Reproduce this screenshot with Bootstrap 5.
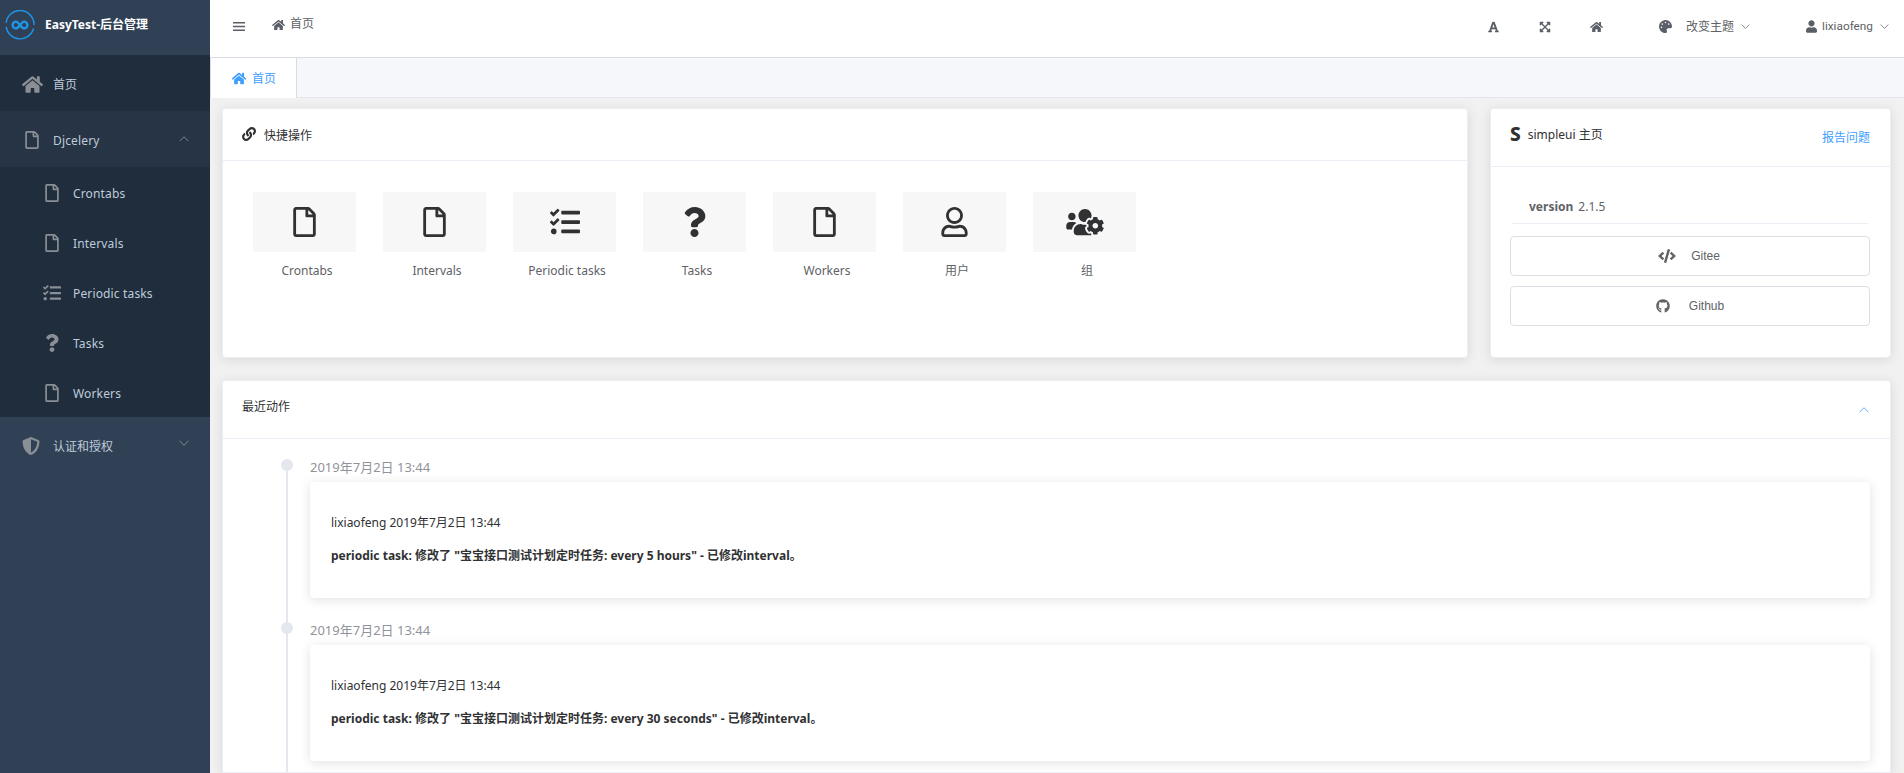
<!DOCTYPE html>
<html lang="zh-CN">
<head>
<meta charset="utf-8">
<title>EasyTest-后台管理</title>
<link href="https://cdn.jsdelivr.net/npm/bootstrap@5.3.0/dist/css/bootstrap.min.css" rel="stylesheet">
<style>
html,body{height:100%;}
body{overflow:hidden;background:#fff;color:#606266;font-family:"Noto Sans","Noto Sans CJK SC",sans-serif;font-size:12px;}
.ic{display:inline-block;fill:currentColor;flex:none;}
.app-shell{height:773px;overflow:hidden;}
.side{width:210px;flex:none;background:#304156;color:#bfcbd9;height:100%;}
.side-logo{height:55px;color:#fff;font-weight:700;font-size:12px;padding:0 0 5px 5px;gap:10px;}
.side-item{height:56px;padding:2px 21px 0 22px;font-size:12px;color:#bfcbd9;}
.side-item .ic{color:#8a8f96;}
.side-home{background:#1f2d3d;}
.side-open{background:#263445;}
.side-sub{background:#1f2d3d;}
.side-child{height:50px;padding:2px 0 0 45px;font-size:12px;color:#bfcbd9;letter-spacing:.15px;}
.side-child .ic{color:#8a8f96;}
.side-item .icon-shift{margin-left:3px;}
.side-child .icon-task{margin-left:-2px;}
.icon-cell{width:31px;display:flex;justify-content:flex-start;}
.side-sub .icon-cell{width:28px;}
.side-label{padding-top:2px;}
.lat-label{letter-spacing:.15px;}
.caret-r{margin-left:auto;}
.caret-u{margin-top:-3px;}
.caret-d{margin-top:-7px;}
.side-item .caret-r{color:#8a94a3;}
.main-col{min-width:0;}
.topbar{height:58px;border-bottom:1px solid #d8dce5;color:#606266;flex:none;}
.crumb-ic,.tool-ic{color:#5a5e66;}
.tb-burger{margin:21px 0 0 23px;}
.tb-home{margin:19px 0 0 27px;}
.tb-crumb{margin:15px 0 0 5px;line-height:18px;color:#606266;}
.tb-tools{padding:15px 15px 0 0;height:38px;color:#606266;}
.tb-g1{margin-left:40px;}
.tb-g2{margin-left:39px;}
.tb-g3{margin-left:56px;}
.tb-theme{margin-left:14px;}
.tb-caret{margin-left:7px;}
.tb-g4{margin-left:56px;}
.tb-user{margin-left:5px;font-family:Roboto,sans-serif;font-size:11.8px;}
.tb-caret-end{margin-left:7px;}
.tabbar{height:40px;background:#f5f7fb;border-bottom:1px solid #e4e7ed;flex:none;}
.tab-on{width:87px;background:#fff;border-right:1px solid #d8dce5;border-left:1px solid #d8dce5;color:#409eff;font-size:12px;margin-bottom:-1px;height:40px;gap:5px;padding:1px 0 0 20px;}
.body-pane{padding:10px 13px 0 12px;background:#f1f1f1;flex:1;min-height:0;overflow:hidden;}
.sheet{border:1px solid #ebeef5;border-radius:4px;box-shadow:0 2px 12px 0 rgba(0,0,0,.1);background:#fff;}
.sheet-hd{background:#fff;border-bottom:1px solid #ebeef5;padding:0 19px;border-radius:3px 3px 0 0!important;color:#303133;font-size:12px;}
.flex-keep{flex:none;}
.quick-card{height:250px;width:1246px;flex:none;}
.quick-hd{height:52px;gap:8px;}
.quick-ic{margin-top:-2px;}
.quick-tt{padding-top:2px;}
.quick-bd{padding:31px 20px 0 30px;gap:27px;}
.quick-item{width:103px;color:#606266;font-size:12px;text-align:center;}
.quick-box{height:60px;background:#f7f7f7;color:#303133;}
.quick-text{margin-top:10px;line-height:18px;padding-left:5px;}
.home-card{height:250px;width:401px;flex:none;margin-left:22px;}
.home-hd{height:58px;}
.home-tt{gap:7px;margin-top:-6px;}
.s-mark{font-size:19px;font-weight:800;color:#303133;line-height:1;}
.home-report{color:#409eff;font-size:12px;margin:0 1px 0 0;text-decoration:none;}
.home-bd{padding:20px 20px 0 19px;}
.ver-row{height:37px;padding:8px 0 0 17px;margin:0 2px;border-bottom:1px solid #ebeef5;gap:5px;font-size:12px;line-height:24px;}
.ver-row b{color:#606266;font-weight:700;}
.link-btn{height:40px;border:1px solid #dcdfe6;border-radius:4px;color:#606266;font-family:"Liberation Sans",sans-serif;font-size:12px;background:#fff;padding:0;width:100%;}
.btn-a{margin-top:12px;gap:15px;padding-right:2px;}
.btn-b{margin-top:10px;gap:19px;}
.log-card{margin-top:22px;flex:1;min-height:0;border-radius:4px 4px 0 0;}
.log-hd{height:58px;flex:none;}
.log-title{margin-top:-5px;}
.log-caret{color:#409eff;margin-right:2px;}
.log-bd{padding:0 20px 0 54px;overflow:hidden;}
.tl-item{padding-left:33px;height:163px;position:relative;}
.tl-item::before{content:"";position:absolute;left:9px;top:26px;bottom:-26px;width:2px;background:#e4e7ed;}
.tl-dot{position:absolute;left:4px;top:20px;width:12px;height:12px;border-radius:50%;background:#e4e7ed;}
.tl-date{color:#909399;font-size:13px;height:43px;padding-top:18px;line-height:20px;}
.tl-box{height:116px;border:0;border-radius:4px;box-shadow:0 2px 12px 0 rgba(0,0,0,.12);padding:25px 20px 0 21px;color:#303133;font-size:12px;}
.tl-line{line-height:32px;}
.tl-strong{font-weight:700;color:#303133;margin-top:1px;}
</style>
</head>
<body>
<svg width="0" height="0" class="position-absolute" aria-hidden="true">
<symbol id="i-home" viewBox="0 0 576 512"><path d="M280.37 148.26L96 300.11V464a16 16 0 0 0 16 16l112.06-.29a16 16 0 0 0 15.92-16V368a16 16 0 0 1 16-16h64a16 16 0 0 1 16 16v95.64a16 16 0 0 0 16 16.05L464 480a16 16 0 0 0 16-16V300L295.67 148.26a12.19 12.19 0 0 0-15.3 0zM571.6 251.47L488 182.56V44.05a12 12 0 0 0-12-12h-56a12 12 0 0 0-12 12v72.61L318.47 43a48 48 0 0 0-61 0L4.34 251.47a12 12 0 0 0-1.6 16.9l25.5 31A12 12 0 0 0 45.15 301l235.22-193.74a12.19 12.19 0 0 1 15.3 0L530.9 301a12 12 0 0 0 16.9-1.6l25.5-31a12 12 0 0 0-1.7-16.93z"/></symbol>
<symbol id="i-file" viewBox="0 0 384 512"><path d="M369.9 97.9L286 14C277 5 264.8-.1 252.1-.1H48C21.5 0 0 21.5 0 48v416c0 26.5 21.5 48 48 48h288c26.5 0 48-21.5 48-48V131.9c0-12.7-5.1-25-14.1-34zM332.1 128H256V51.9l76.1 76.1zM48 464V48h160v104c0 13.3 10.7 24 24 24h104v288H48z"/></symbol>
<symbol id="i-tasks" viewBox="0 0 512 512"><path d="M139.61 35.5a12 12 0 0 0-17 0L58.93 98.81l-22.7-22.12a12 12 0 0 0-17 0L3.53 92.41a12 12 0 0 0 0 17l47.59 47.4a12.78 12.78 0 0 0 17.61 0l15.59-15.62L156.52 69a12.09 12.09 0 0 0 .09-17zm0 159.19a12 12 0 0 0-17 0l-63.68 63.72-22.7-22.1a12 12 0 0 0-17 0L3.53 252a12 12 0 0 0 0 17L51 316.5a12.77 12.77 0 0 0 17.6 0l15.7-15.69 72.2-72.22a12 12 0 0 0 .09-16.9zM64 368c-26.49 0-48.59 21.5-48.59 48S37.53 464 64 464a48 48 0 0 0 0-96zm432 16H208a16 16 0 0 0-16 16v32a16 16 0 0 0 16 16h288a16 16 0 0 0 16-16v-32a16 16 0 0 0-16-16zm0-320H208a16 16 0 0 0-16 16v32a16 16 0 0 0 16 16h288a16 16 0 0 0 16-16V80a16 16 0 0 0-16-16zm0 160H208a16 16 0 0 0-16 16v32a16 16 0 0 0 16 16h288a16 16 0 0 0 16-16v-32a16 16 0 0 0-16-16z"/></symbol>
<symbol id="i-q" viewBox="0 0 384 512"><path d="M202.021 0C122.202 0 70.503 32.703 29.914 91.026c-7.363 10.58-5.093 25.086 5.178 32.874l43.138 32.709c10.373 7.865 25.132 6.026 33.253-4.148 25.049-31.381 43.63-49.449 82.757-49.449 30.764 0 68.816 19.799 68.816 49.631 0 22.552-18.617 34.134-48.993 51.164-35.423 19.86-82.299 44.576-82.299 106.405V320c0 13.255 10.745 24 24 24h72.471c13.255 0 24-10.745 24-24v-5.773c0-42.86 125.268-44.645 125.268-160.627C377.504 66.256 286.902 0 202.021 0zM192 373.459c-38.196 0-69.271 31.075-69.271 69.271 0 38.195 31.075 69.27 69.271 69.27s69.271-31.075 69.271-69.271-31.075-69.27-69.271-69.27z"/></symbol>
<symbol id="i-user-o" viewBox="0 0 448 512"><path d="M313.6 304c-28.7 0-42.5 16-89.6 16-47.1 0-60.8-16-89.6-16C60.2 304 0 364.2 0 438.4V464c0 26.5 21.5 48 48 48h352c26.5 0 48-21.5 48-48v-25.6c0-74.2-60.2-134.4-134.4-134.4zM400 464H48v-25.6c0-47.6 38.8-86.4 86.4-86.4 14.6 0 38.3 16 89.6 16 51.7 0 74.9-16 89.6-16 47.6 0 86.4 38.8 86.4 86.4V464zM224 288c79.5 0 144-64.5 144-144S303.5 0 224 0 80 64.5 80 144s64.5 144 144 144zm0-240c52.9 0 96 43.1 96 96s-43.1 96-96 96-96-43.1-96-96 43.1-96 96-96z"/></symbol>
<symbol id="i-user" viewBox="0 0 448 512"><path d="M224 256c70.7 0 128-57.3 128-128S294.7 0 224 0 96 57.3 96 128s57.3 128 128 128zm89.6 32h-16.7c-22.2 10.2-46.9 16-72.9 16s-50.6-5.8-72.9-16h-16.7C60.2 288 0 348.2 0 422.4V464c0 26.5 21.5 48 48 48h352c26.5 0 48-21.5 48-48v-41.6c0-74.2-60.2-134.4-134.4-134.4z"/></symbol>
<symbol id="i-cog" viewBox="0 0 640 512"><path d="M610.5 341.3c2.6-14.1 2.6-28.5 0-42.6l25.8-14.9c3-1.7 4.3-5.2 3.3-8.5-6.7-21.6-18.2-41.2-33.2-57.4-2.3-2.5-6-3.1-9-1.4l-25.8 14.9c-10.9-9.3-23.4-16.5-36.9-21.3v-29.8c0-3.4-2.4-6.4-5.7-7.1-22.3-5-45-4.8-66.2 0-3.3.7-5.7 3.7-5.7 7.1v29.8c-13.5 4.8-26 12-36.9 21.3l-25.8-14.9c-2.9-1.7-6.7-1.1-9 1.4-15 16.2-26.5 35.8-33.2 57.4-1 3.3.4 6.8 3.3 8.5l25.8 14.9c-2.6 14.1-2.6 28.5 0 42.6l-25.8 14.9c-3 1.7-4.3 5.2-3.3 8.5 6.7 21.6 18.2 41.1 33.2 57.4 2.3 2.5 6 3.1 9 1.4l25.8-14.9c10.9 9.3 23.4 16.5 36.9 21.3v29.8c0 3.4 2.4 6.4 5.7 7.1 22.3 5 45 4.8 66.2 0 3.3-.7 5.7-3.7 5.7-7.1v-29.8c13.5-4.8 26-12 36.9-21.3l25.8 14.9c2.9 1.7 6.7 1.1 9-1.4 15-16.2 26.5-35.8 33.2-57.4 1-3.3-.4-6.8-3.3-8.5l-25.8-14.9zM496 368.5c-26.8 0-48.5-21.8-48.5-48.5s21.8-48.5 48.5-48.5 48.5 21.8 48.5 48.5-21.7 48.5-48.5 48.5zM96 224c35.3 0 64-28.7 64-64s-28.7-64-64-64-64 28.7-64 64 28.7 64 64 64zm224 32c1.9 0 3.7-.5 5.6-.6 8.3-21.7 20.5-42.1 36.3-59.2 7.4-8 17.9-12.6 28.9-12.6 6.9 0 13.7 1.8 19.6 5.3l7.9 4.6c.8-.5 1.6-.9 2.4-1.4 7-14.6 11.2-30.8 11.2-48 0-61.9-50.1-112-112-112S208 82.1 208 144c0 61.9 50.1 112 112 112zm105.2 194.5c-2.3-1.2-4.6-2.6-6.8-3.9-8.2 4.8-15.3 9.8-27.5 9.8-10.9 0-21.4-4.6-28.9-12.6-18.3-19.8-32.3-43.9-40.2-69.6-10.7-34.5 24.9-49.7 25.8-50.3-.1-2.6-.1-5.2 0-7.8l-7.9-4.6c-3.8-2.2-7-5-9.8-8.1-3.3.2-6.5.6-9.8.6-24.6 0-47.6-6-68.5-16h-8.3C179.6 288 128 339.6 128 403.2V432c0 26.5 21.5 48 48 48h255.4c-3.7-6-6.2-12.8-6.2-20.3v-9.2zM173.1 274.6C161.5 263.1 145.6 256 128 256H64c-35.3 0-64 28.7-64 64v32c0 17.7 14.3 32 32 32h65.9c6.3-47.4 34.9-87.3 75.2-109.4z"/></symbol>
<symbol id="i-link" viewBox="0 0 512 512"><path d="M326.612 185.391c59.747 59.809 58.927 155.698.36 214.59-.11.12-.24.25-.36.37l-67.2 67.2c-59.27 59.27-155.699 59.262-214.96 0-59.27-59.26-59.27-155.7 0-214.96l37.106-37.106c9.84-9.84 26.786-3.3 27.294 10.606.648 17.722 3.826 35.527 9.69 52.721 1.986 5.822.567 12.262-3.783 16.612l-13.087 13.087c-28.026 28.026-28.905 73.66-1.155 101.96 28.024 28.579 74.086 28.749 102.325.51l67.2-67.19c28.191-28.191 28.073-73.757 0-101.83-3.701-3.694-7.429-6.564-10.341-8.569a16.037 16.037 0 0 1-6.947-12.606c-.396-10.567 3.348-21.456 11.698-29.806l21.054-21.055c5.521-5.521 14.182-6.199 20.584-1.731a152.482 152.482 0 0 1 20.522 17.197zM467.547 44.449c-59.261-59.262-155.69-59.27-214.96 0l-67.2 67.2c-.12.12-.25.25-.36.37-58.566 58.892-59.387 154.781.36 214.59a152.454 152.454 0 0 0 20.521 17.196c6.402 4.468 15.064 3.789 20.584-1.731l21.054-21.055c8.35-8.35 12.094-19.239 11.698-29.806a16.037 16.037 0 0 0-6.947-12.606c-2.912-2.005-6.64-4.875-10.341-8.569-28.073-28.073-28.191-73.639 0-101.83l67.2-67.19c28.239-28.239 74.3-28.069 102.325.51 27.75 28.3 26.872 73.934-1.155 101.96l-13.087 13.087c-4.35 4.35-5.769 10.79-3.783 16.612 5.864 17.194 9.042 34.999 9.69 52.721.509 13.906 17.454 20.446 27.294 10.606l37.106-37.106c59.271-59.259 59.271-155.699.001-214.959z"/></symbol>
<symbol id="i-shield" viewBox="0 0 512 512"><path d="M466.5 83.7l-192-80a48.15 48.15 0 0 0-36.9 0l-192 80C27.7 91.1 16 108.6 16 128c0 198.5 114.5 335.7 221.5 380.3 11.8 4.9 25.1 4.9 36.9 0C360.1 472.6 496 349.3 496 128c0-19.4-11.7-36.9-29.5-44.3zM256.1 446.3l-.1-381 175.9 73.3c-3.3 151.4-82.1 261.1-175.8 307.7z"/></symbol>
<symbol id="i-font" viewBox="0 0 448 512"><path d="M432 416h-23.41L277.88 53.69A32 32 0 0 0 247.58 32h-47.16a32 32 0 0 0-30.3 21.69L39.41 416H16a16 16 0 0 0-16 16v32a16 16 0 0 0 16 16h128a16 16 0 0 0 16-16v-32a16 16 0 0 0-16-16h-19.6l23.3-64h152.6l23.3 64H304a16 16 0 0 0-16 16v32a16 16 0 0 0 16 16h128a16 16 0 0 0 16-16v-32a16 16 0 0 0-16-16zM176.85 272L224 142.51 271.15 272z"/></symbol>
<symbol id="i-expand" viewBox="0 0 448 512"><path d="M448.3 344v112a23.94 23.94 0 0 1-24 24h-112c-21.39 0-32.09-25.9-17-41l36.2-36.2L224 295.6 116.77 402.9 153 439c15.09 15.1 4.39 41-17 41H24a23.94 23.94 0 0 1-24-24V344c0-21.4 25.89-32.1 41-17l36.19 36.2L184.46 256 77.18 148.7 41 185c-15.1 15.1-41 4.4-41-17V56a23.94 23.94 0 0 1 24-24h112c21.39 0 32.09 25.9 17 41l-36.2 36.2L224 216.4l107.23-107.3L295 73c-15.09-15.1-4.39-41 17-41h112a23.94 23.94 0 0 1 24 24v112c0 21.4-25.89 32.1-41 17l-36.19-36.2L263.54 256l107.28 107.3L407 327.1c15.1-15.2 41-4.5 41 16.9z"/></symbol>
<symbol id="i-palette" viewBox="0 0 512 512"><path d="M204.3 5C104.9 24.4 24.8 104.3 5.2 203.4c-37 187 131.7 326.4 258.8 306.7 41.2-6.4 61.4-54.6 42.5-91.7-23.1-45.4 9.9-98.4 60.9-98.4h79.7c35.8 0 64.8-29.6 64.9-65.3C511.5 97.1 368.1-26.9 204.3 5zM96 320c-17.7 0-32-14.3-32-32s14.3-32 32-32 32 14.3 32 32-14.3 32-32 32zm32-128c-17.7 0-32-14.3-32-32s14.3-32 32-32 32 14.3 32 32-14.3 32-32 32zm128-64c-17.7 0-32-14.3-32-32s14.3-32 32-32 32 14.3 32 32-14.3 32-32 32zm128 64c-17.7 0-32-14.3-32-32s14.3-32 32-32 32 14.3 32 32-14.3 32-32 32z"/></symbol>
<symbol id="i-code" viewBox="0 0 640 512"><path d="M278.9 511.5l-61-17.7c-6.4-1.8-10-8.5-8.2-14.9L346.2 8.7c1.8-6.4 8.5-10 14.9-8.2l61 17.7c6.4 1.8 10 8.5 8.2 14.9L293.8 503.3c-1.9 6.4-8.5 10.1-14.9 8.2zm-114-112.2l43.5-46.4c4.6-4.9 4.3-12.7-.8-17.2L117 256l90.6-79.7c5.1-4.5 5.5-12.3.8-17.2l-43.5-46.4c-4.5-4.8-12.1-5.1-17-.5L3.8 247.2c-5.1 4.7-5.1 12.8 0 17.5l144.1 135.1c4.9 4.6 12.5 4.4 17-.5zm327.2.6l144.1-135.1c5.1-4.7 5.1-12.8 0-17.5L492.1 112.1c-4.8-4.5-12.4-4.3-17 .5L431.6 159c-4.6 4.9-4.3 12.7.8 17.2L523 256l-90.6 79.7c-5.1 4.5-5.5 12.3-.8 17.2l43.5 46.4c4.5 4.9 12.1 5.1 17 .6z"/></symbol>
<symbol id="i-github" viewBox="0 0 496 512"><path d="M165.9 397.4c0 2-2.3 3.6-5.2 3.6-3.3.3-5.6-1.3-5.6-3.6 0-2 2.3-3.6 5.2-3.6 3-.3 5.6 1.3 5.6 3.6zm-31.1-4.5c-.7 2 1.3 4.3 4.3 4.9 2.6 1 5.6 0 6.2-2s-1.3-4.3-4.3-5.2c-2.6-.7-5.5.3-6.2 2.3zm44.2-1.7c-2.9.7-4.9 2.6-4.6 4.9.3 2 2.9 3.3 5.9 2.6 2.9-.7 4.9-2.6 4.6-4.6-.3-1.9-3-3.2-5.9-2.9zM244.8 8C106.1 8 0 113.3 0 252c0 110.9 69.8 205.8 169.5 239.2 12.8 2.3 17.3-5.6 17.3-12.1 0-6.2-.3-40.4-.3-61.4 0 0-70 15-84.7-29.8 0 0-11.4-29.1-27.8-36.6 0 0-22.9-15.7 1.6-15.4 0 0 24.9 2 38.6 25.8 21.9 38.6 58.6 27.5 72.9 20.9 2.3-16 8.8-27.1 16-33.7-55.9-6.2-112.3-14.3-112.3-110.5 0-27.5 7.6-41.3 23.6-58.9-2.6-6.5-11.1-33.3 2.6-67.9 20.9-6.5 69 27 69 27 20-5.6 41.5-8.5 62.8-8.5s42.8 2.9 62.8 8.5c0 0 48.1-33.6 69-27 13.7 34.7 5.2 61.4 2.6 67.9 16 17.7 25.8 31.5 25.8 58.9 0 96.5-58.9 104.2-114.8 110.5 9.2 7.9 17 22.9 17 46.4 0 33.7-.3 75.4-.3 83.6 0 6.5 4.6 14.4 17.3 12.1C428.2 457.8 496 362.9 496 252 496 113.3 383.5 8 244.8 8z"/></symbol>
<symbol id="i-up" viewBox="0 0 12 7"><path d="M.6 6.2 6 .8l5.4 5.4" fill="none" stroke="currentColor" stroke-width="1"/></symbol>
<symbol id="i-down" viewBox="0 0 12 7"><path d="M.6.8 6 6.2 11.4.8" fill="none" stroke="currentColor" stroke-width="1"/></symbol>
</svg>

<div class="app-shell d-flex">
  <aside class="side d-flex flex-column">
    <div class="side-logo d-flex align-items-center">
      <svg width="30" height="30" viewBox="0 0 30 30" class="ic">
        <path d="M1.1 12.9A14 14 0 0 1 29 15M28.6 18.4A14 14 0 0 1 1.2 16.9" fill="none" stroke="#1e96ea" stroke-width="1.4"/>
        <path d="M15 15c-2-2.6-2.9-3.4-4-3.4a3.4 3.4 0 0 0 0 6.8c1.1 0 2-.8 4-3.4s2.900-3.400 4-3.400a3.4 3.4 0 0 1 0 6.800c-1.100 0-2-.8-4-3.400z" fill="none" stroke="#1e96ea" stroke-width="2.400"/>
      </svg>
      <span>EasyTest-后台管理</span>
    </div>
    <div class="side-item side-home d-flex align-items-center">
      <span class="icon-cell"><svg class="ic" width="21" height="19"><use href="#i-home"/></svg></span>
      <span class="side-label">首页</span>
    </div>
    <div class="side-item side-open d-flex align-items-center">
      <span class="icon-cell"><svg class="ic icon-shift" width="14" height="18"><use href="#i-file"/></svg></span>
      <span class="side-label lat-label">Djcelery</span>
      <svg class="ic caret-r caret-u" width="10" height="6"><use href="#i-up"/></svg>
    </div>
    <div class="side-sub">
      <div class="side-child d-flex align-items-center"><span class="icon-cell"><svg class="ic" width="14" height="18"><use href="#i-file"/></svg></span><span class="side-label">Crontabs</span></div>
      <div class="side-child d-flex align-items-center"><span class="icon-cell"><svg class="ic" width="14" height="18"><use href="#i-file"/></svg></span><span class="side-label">Intervals</span></div>
      <div class="side-child d-flex align-items-center"><span class="icon-cell"><svg class="ic icon-task" width="18" height="18"><use href="#i-tasks"/></svg></span><span class="side-label">Periodic tasks</span></div>
      <div class="side-child d-flex align-items-center"><span class="icon-cell"><svg class="ic" width="14" height="18"><use href="#i-q"/></svg></span><span class="side-label">Tasks</span></div>
      <div class="side-child d-flex align-items-center"><span class="icon-cell"><svg class="ic" width="14" height="18"><use href="#i-file"/></svg></span><span class="side-label">Workers</span></div>
    </div>
    <div class="side-item d-flex align-items-center">
      <span class="icon-cell"><svg class="ic" width="18" height="18"><use href="#i-shield"/></svg></span>
      <span class="side-label">认证和授权</span>
      <svg class="ic caret-r caret-d" width="10" height="6"><use href="#i-down"/></svg>
    </div>
  </aside>

  <div class="main-col flex-grow-1 d-flex flex-column">
    <header class="topbar d-flex align-items-start">
      <svg class="ic crumb-ic tb-burger" width="12" height="11" viewBox="0 0 12 11"><path d="M0 1h12v1.400H0zM0 4.800h12v1.400H0zM0 8.600h12V10H0z"/></svg>
      <svg class="ic crumb-ic tb-home" width="13" height="12"><use href="#i-home"/></svg>
      <span class="tb-crumb">首页</span>
      <div class="ms-auto d-flex align-items-center tb-tools">
        <svg class="ic tool-ic" width="11" height="12"><use href="#i-font"/></svg>
        <svg class="ic tool-ic tb-g1" width="12" height="12"><use href="#i-expand"/></svg>
        <svg class="ic tool-ic tb-g2" width="13" height="12"><use href="#i-home"/></svg>
        <svg class="ic tool-ic tb-g3" width="13" height="13"><use href="#i-palette"/></svg>
        <span class="tb-theme">改变主题</span>
        <svg class="ic tool-ic tb-caret" width="9" height="5"><use href="#i-down"/></svg>
        <svg class="ic tool-ic tb-g4" width="11" height="13"><use href="#i-user"/></svg>
        <span class="tb-user">lixiaofeng</span>
        <svg class="ic tool-ic tb-caret-end" width="9" height="5"><use href="#i-down"/></svg>
      </div>
    </header>
    <nav class="tabbar d-flex">
      <div class="tab-on d-flex align-items-center">
        <svg class="ic" width="16" height="13"><use href="#i-home"/></svg><span>首页</span>
      </div>
    </nav>
    <main class="body-pane d-flex flex-column">
      <div class="d-flex flex-keep">
        <section class="card sheet quick-card">
          <div class="card-header sheet-hd quick-hd d-flex align-items-center">
            <svg class="ic quick-ic" width="14" height="14"><use href="#i-link"/></svg><span class="quick-tt">快捷操作</span>
          </div>
          <div class="card-body quick-bd d-flex align-items-start">
            <div class="quick-item"><div class="quick-box d-flex align-items-center justify-content-center"><svg class="ic" width="23" height="30"><use href="#i-file"/></svg></div><div class="quick-text">Crontabs</div></div>
            <div class="quick-item"><div class="quick-box d-flex align-items-center justify-content-center"><svg class="ic" width="23" height="30"><use href="#i-file"/></svg></div><div class="quick-text">Intervals</div></div>
            <div class="quick-item"><div class="quick-box d-flex align-items-center justify-content-center"><svg class="ic" width="30" height="30"><use href="#i-tasks"/></svg></div><div class="quick-text">Periodic tasks</div></div>
            <div class="quick-item"><div class="quick-box d-flex align-items-center justify-content-center"><svg class="ic" width="23" height="30"><use href="#i-q"/></svg></div><div class="quick-text">Tasks</div></div>
            <div class="quick-item"><div class="quick-box d-flex align-items-center justify-content-center"><svg class="ic" width="23" height="30"><use href="#i-file"/></svg></div><div class="quick-text">Workers</div></div>
            <div class="quick-item"><div class="quick-box d-flex align-items-center justify-content-center"><svg class="ic" width="27" height="30"><use href="#i-user-o"/></svg></div><div class="quick-text">用户</div></div>
            <div class="quick-item"><div class="quick-box d-flex align-items-center justify-content-center"><svg class="ic" width="38" height="30"><use href="#i-cog"/></svg></div><div class="quick-text">组</div></div>
          </div>
        </section>
        <section class="card sheet home-card">
          <div class="card-header sheet-hd home-hd d-flex align-items-center justify-content-between">
            <div class="home-tt d-flex align-items-center"><span class="s-mark">S</span><span>simpleui 主页</span></div>
            <a class="home-report" href="#">报告问题</a>
          </div>
          <div class="card-body home-bd d-flex flex-column">
            <div class="ver-row d-flex"><b>version</b><span>2.1.5</span></div>
            <button class="btn link-btn d-flex align-items-center justify-content-center btn-a" type="button"><svg class="ic" width="18" height="14"><use href="#i-code"/></svg><span>Gitee</span></button>
            <button class="btn link-btn d-flex align-items-center justify-content-center btn-b" type="button"><svg class="ic" width="14" height="14"><use href="#i-github"/></svg><span>Github</span></button>
          </div>
        </section>
      </div>
      <section class="card sheet log-card">
        <div class="card-header sheet-hd log-hd d-flex align-items-center justify-content-between">
          <span class="log-title">最近动作</span>
          <svg class="ic log-caret" width="10" height="6"><use href="#i-up"/></svg>
        </div>
        <div class="card-body log-bd">
          <div class="tl-item"><span class="tl-dot"></span>
            <div class="tl-date">2019年7月2日 13:44</div>
            <div class="card tl-box"><div class="tl-line">lixiaofeng 2019年7月2日 13:44</div><div class="tl-line tl-strong">periodic task: 修改了 "宝宝接口测试计划定时任务: every 5 hours" - 已修改interval。</div></div>
          </div>
          <div class="tl-item"><span class="tl-dot"></span>
            <div class="tl-date">2019年7月2日 13:44</div>
            <div class="card tl-box"><div class="tl-line">lixiaofeng 2019年7月2日 13:44</div><div class="tl-line tl-strong">periodic task: 修改了 "宝宝接口测试计划定时任务: every 30 seconds" - 已修改interval。</div></div>
          </div>
        </div>
      </section>
    </main>
  </div>
</div>
<script src="https://cdn.jsdelivr.net/npm/bootstrap@5.3.0/dist/js/bootstrap.bundle.min.js"></script>
</body>
</html>
